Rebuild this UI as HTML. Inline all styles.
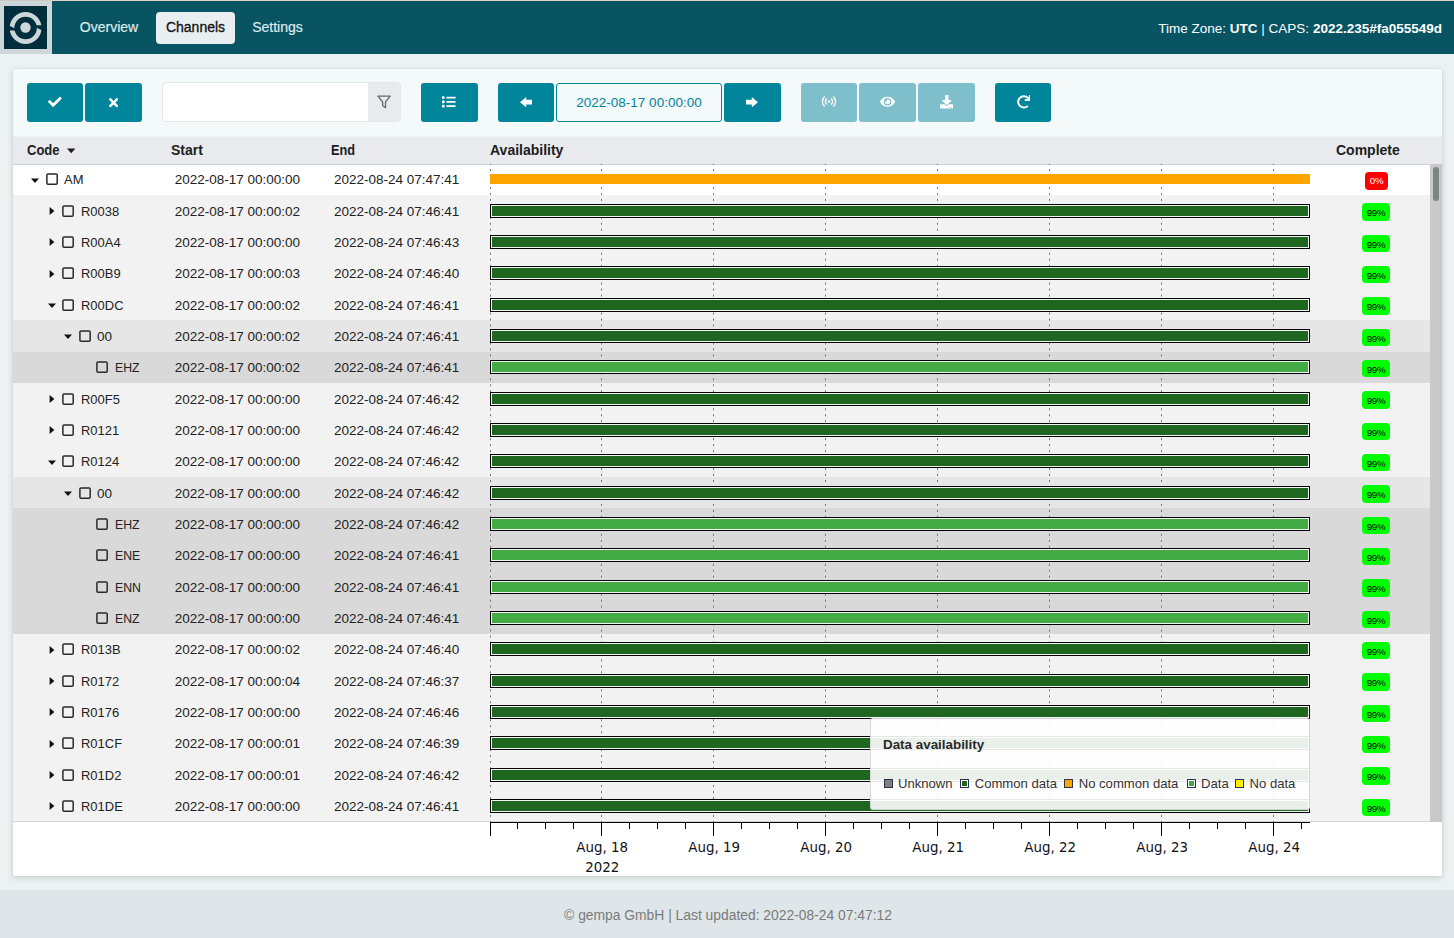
<!DOCTYPE html>
<html lang="en"><head><meta charset="utf-8"><title>CAPS - Channels</title>
<style>
*{box-sizing:border-box;margin:0;padding:0}
html,body{width:1454px;height:938px;overflow:hidden}
body{position:relative;background:#ecf2f2;font-family:"Liberation Sans","DejaVu Sans",sans-serif;font-size:13.5px;color:#222}
.abs{position:absolute}
.topline{position:absolute;left:0;top:0;width:1454px;height:1px;background:linear-gradient(90deg,#cfc9c6 52px,#e5d1cb 52px)}
.nav{position:absolute;left:0;top:1px;width:1454px;height:53px;background:#085462}
.logo{position:absolute;left:0;top:1px;width:52px;height:53px;background:#cdd7da}
.logo i{position:absolute;left:3.6px;top:4.5px;width:43.7px;height:43.8px;background:#012e3c}
.logo svg{position:absolute;left:3.6px;top:4.5px}
.nv{position:absolute;top:12px;height:32px;line-height:31px;font-size:14px;color:#dfe9eb;text-align:center;white-space:nowrap;-webkit-text-stroke:0.2px #dfe9eb}
.nv.act{background:#e9eef0;color:#111;border-radius:4px;font-weight:normal;-webkit-text-stroke:0.3px #111}
.nr{position:absolute;right:12px;top:20px;line-height:18px;font-size:13.5px;color:#fff;white-space:nowrap}
.nr b{font-weight:bold}
.panel{position:absolute;left:13px;top:69px;width:1429px;height:807px;border-radius:2px;background:#fff;box-shadow:0 2px 6px rgba(0,0,0,.15),0 0 2px rgba(40,40,80,.10)}
.toolbar{position:absolute;left:13px;top:69px;width:1429px;height:67px;background:#f4f9fa;border-radius:2px 2px 0 0}
.btn{position:absolute;top:83px;height:39px;background:#00859b;border-radius:3px}
.btn.dis{background:#7fbfcc}
.btn svg{position:absolute;fill:#fff}
.filter{position:absolute;left:162px;top:82px;width:239px;height:40px;background:#fff;border:1px solid #e3e6ea;border-radius:4px;overflow:hidden}
.filter i{position:absolute;right:0;top:0;width:32px;height:38px;background:#e8eaed}
.filter svg{position:absolute;right:9px;top:12px}
.datebox{position:absolute;left:556px;top:83px;width:166px;height:39px;border:1px solid #00859b;border-radius:3px;background:transparent;color:#00859b;text-align:center;line-height:37px;font-size:13.5px}
.thead{position:absolute;left:13px;top:136px;width:1429px;height:29px;background:#e8eaed;border-top:1px solid #eef1f3;border-bottom:1px solid #ccd3d9;z-index:1}
.th{position:absolute;z-index:2;top:141px;line-height:18px;font-weight:bold;font-size:14px;color:#1d1d1d;white-space:nowrap}
.tbody{position:absolute;left:13px;top:164px;width:1417px;height:658px;overflow:hidden}
.row{position:absolute;left:0;width:1417px}
.row.l0{background:#fff}.row.l1{background:#f2f2f2}.row.l2{background:#e6e6e6}.row.l3{background:#d9d9d9}
.tw{position:absolute;top:11px;fill:#111;z-index:2}
.cb{position:absolute;top:9.67px;z-index:2}
.c{position:absolute;top:7.6px;line-height:18px;white-space:nowrap;z-index:2;color:#222}
.st{left:161.7px}.en{left:321px}
.bar{position:absolute;left:477px;width:820px;z-index:2}
.bar.o{top:10.2px;height:10px;background:#ffa500}
.bar.d,.bar.l{top:8.7px;height:14px;border:1px solid #000;background:#f4f4f4;padding:1px}
.bar i{display:block;width:100%;height:100%}
.bar.d i{background:#1f6620}.bar.l i{background:#44aa44}
.bd{position:absolute;top:8.33px;height:17.5px;line-height:19.6px;border-radius:4px;font-size:9.7px;letter-spacing:-.35px;text-align:center;z-index:2}
.bd.r{left:1352px;width:23px;background:#f00;color:#fff;line-height:17.4px}
.bd.g{left:1349px;width:28px;background:#0f0;color:#000}
.grid{position:absolute;left:0;top:164px;z-index:1}
.tline{position:absolute;left:13px;top:821px;width:1429px;height:1px;background:#cfd6db}
.axis{position:absolute;left:0;top:815px;z-index:3}
.axis text{font-family:"DejaVu Sans",sans-serif;font-size:13.4px;fill:#111;text-anchor:middle}
.legend{position:absolute;left:870px;top:718px;width:440px;height:92px;background:rgba(255,255,255,.9);border:1px solid rgba(205,205,210,.8);border-radius:3px;z-index:4;font-size:13.1px;color:#333}
.legend b{position:absolute;left:12px;top:17px;line-height:18px;font-size:13.4px;color:#2a2a2a}
.lg{position:absolute;top:56px;line-height:18px;white-space:nowrap}
.sw{position:absolute;top:60.300px;width:9px;height:9px;border:1px solid #2a3350}
.sw.in{padding:1px;background:#fff}.sw.in i{display:block;width:100%;height:100%}
.strack{position:absolute;left:1430px;top:164px;width:12px;height:658px;background:#c9c9c9;z-index:3}
.sthumb{position:absolute;left:1433px;top:167px;width:6px;height:34px;border-radius:3px;background:#7e8383;z-index:4}
.footer{position:absolute;left:0;top:890px;width:1454px;height:48px;background:#dee6e9;color:#7a7a7a;text-align:center;line-height:50px;font-size:13.85px;padding-left:2px}
.code.n{transform:scaleX(.91);transform-origin:0 50%}
.code.m{transform:scaleX(.96);transform-origin:0 50%}

</style></head>
<body>
<div class="nav"></div><div class="topline"></div>
<div class="logo"><i></i><svg width="44" height="44" viewBox="0 0 44 44"><circle cx="21.5" cy="21.5" r="5.2" fill="#cdd7da"/><circle cx="21.6" cy="22" r="13.6" fill="none" stroke="#cdd7da" stroke-width="4.7"/><path d="M32.200 19.200H39.200V24.900L32.200 21.400zM11 24.500H4V19L11 22.600z" fill="#012e3c"/></svg></div>
<div class="nv" style="left:69px;width:80px">Overview</div>
<div class="nv act" style="left:156px;width:79px">Channels</div>
<div class="nv" style="left:242px;width:71px">Settings</div>
<div class="nr">Time Zone: <b>UTC</b> | CAPS: <b>2022.235#fa055549d</b></div>
<div class="panel"></div>
<div class="toolbar"></div>
<div class="btn" style="left:27px;width:56px"><svg style="left:21.150px;top:12.200px" width="13.700" height="13.700" viewBox="0 0 512 512"><path d="M173.898 439.404l-166.400-166.400c-9.997-9.997-9.997-26.206 0-36.204l36.203-36.204c9.997-9.998 26.207-9.998 36.204 0L192 312.690 432.095 72.596c9.997-9.997 26.207-9.997 36.204 0l36.203 36.204c9.997 9.997 9.997 26.206 0 36.204l-294.400 294.401c-9.998 9.997-26.207 9.997-36.204-.001z"/></svg></div>
<div class="btn" style="left:85px;width:57px"><svg style="left:24px;top:12.800px" width="9.200" height="13.400" viewBox="0 0 352 512"><path d="M242.720 256l100.070-100.070c12.280-12.280 12.280-32.190 0-44.480l-22.240-22.240c-12.280-12.280-32.190-12.280-44.480 0L176 189.280 75.930 89.210c-12.280-12.280-32.190-12.280-44.480 0L9.210 111.450c-12.280 12.280-12.280 32.190 0 44.480L109.280 256 9.210 356.070c-12.280 12.280-12.280 32.190 0 44.480l22.240 22.240c12.280 12.280 32.200 12.280 44.480 0L176 322.720l100.070 100.070c12.280 12.280 32.200 12.280 44.480 0l22.240-22.240c12.280-12.280 12.280-32.190 0-44.480L242.720 256z"/></svg></div>
<div class="filter"><i></i><svg width="14" height="14" viewBox="0 0 14 14"><path d="M1 1.200h12.200L8.500 7v5.600L5.700 10.800V7z" fill="none" stroke="#6b6b6b" stroke-width="1.300" stroke-linejoin="round"/></svg></div>
<div class="btn" style="left:421px;width:57px"><svg style="left:21.450px;top:12.150px" width="13.700" height="13.700" viewBox="0 0 512 512"><path d="M80 368H16a16 16 0 0 0-16 16v64a16 16 0 0 0 16 16h64a16 16 0 0 0 16-16v-64a16 16 0 0 0-16-16zm0-320H16A16 16 0 0 0 0 64v64a16 16 0 0 0 16 16h64a16 16 0 0 0 16-16V64a16 16 0 0 0-16-16zm0 160H16a16 16 0 0 0-16 16v64a16 16 0 0 0 16 16h64a16 16 0 0 0 16-16v-64a16 16 0 0 0-16-16zm416 176H176a16 16 0 0 0-16 16v32a16 16 0 0 0 16 16h320a16 16 0 0 0 16-16v-32a16 16 0 0 0-16-16zm0-320H176a16 16 0 0 0-16 16v32a16 16 0 0 0 16 16h320a16 16 0 0 0 16-16V80a16 16 0 0 0-16-16zm0 160H176a16 16 0 0 0-16 16v32a16 16 0 0 0 16 16h320a16 16 0 0 0 16-16v-32a16 16 0 0 0-16-16z"/></svg></div>
<div class="btn" style="left:498px;width:56px"><svg style="left:22px;top:14px" width="12" height="10.400" viewBox="0 0 12 10.400"><path d="M6.200 0v2.800H12v4.800H6.200v2.800L0 5.200z"/></svg></div>
<div class="datebox">2022-08-17 00:00:00</div>
<div class="btn" style="left:724px;width:57px"><svg style="left:22px;top:14px" width="12" height="10.400" viewBox="0 0 12 10.400"><path d="M5.800 0v2.800H0v4.800h5.800v2.800L12 5.200z"/></svg></div>
<div class="btn dis" style="left:801px;width:56px"><svg style="left:20px;top:13.400px" width="16" height="11" viewBox="0 0 16 11"><circle cx="8" cy="5.500" r="1.250"/><path d="M5.500 2.900a3.600 3.600 0 0 0 0 5.200M10.500 2.900a3.600 3.600 0 0 1 0 5.200M3.300 0.900a6.500 6.500 0 0 0 0 9.200M12.700 0.900a6.500 6.500 0 0 1 0 9.200" fill="none" stroke="#fff" stroke-width="1.400" stroke-linecap="round"/></svg></div>
<div class="btn dis" style="left:859px;width:57px"><svg style="left:20.900px;top:12.300px" width="15.200" height="13.500" viewBox="0 0 576 512"><path d="M572.520 241.400C518.290 135.590 410.930 64 288 64S57.680 135.640 3.480 241.410a32.350 32.350 0 0 0 0 29.190C57.710 376.410 165.070 448 288 448s230.320-71.640 284.520-177.410a32.350 32.350 0 0 0 0-29.190zM288 400a144 144 0 1 1 144-144 143.930 143.930 0 0 1-144 144zm0-240a95.310 95.310 0 0 0-25.310 3.790 47.850 47.850 0 0 1-66.900 66.900A95.780 95.780 0 1 0 288 160z"/></svg></div>
<div class="btn dis" style="left:918px;width:57px"><svg style="left:21.850px;top:12.250px" width="13.500" height="13.500" viewBox="0 0 512 512"><path d="M216 0h80c13.300 0 24 10.700 24 24v168h87.700c17.800 0 26.700 21.500 14.100 34.100L269.700 378.300c-7.500 7.500-19.800 7.500-27.300 0L90.100 226.100c-12.600-12.600-3.700-34.100 14.100-34.100H192V24c0-13.300 10.700-24 24-24zm296 376v112c0 13.300-10.700 24-24 24H24c-13.300 0-24-10.700-24-24V376c0-13.300 10.700-24 24-24h146.700l49 49c20.100 20.100 52.500 20.100 72.600 0l49-49H488c13.300 0 24 10.700 24 24zm-124 88c0-11-9-20-20-20s-20 9-20 20 9 20 20 20 20-9 20-20zm64 0c0-11-9-20-20-20s-20 9-20 20 9 20 20 20 20-9 20-20z"/></svg></div>
<div class="btn" style="left:995px;width:56px"><svg style="left:21.600px;top:12px" width="13.700" height="13.700" viewBox="0 0 512 512"><path d="M500.330 0h-47.410a12 12 0 0 0-12 12.570l4 82.760A247.420 247.420 0 0 0 256 8C119.340 8 7.900 119.530 8 256.190 8.100 393.070 119.100 504 256 504a247.100 247.100 0 0 0 166.180-63.910 12 12 0 0 0 .48-17.430l-34-34a12 12 0 0 0-16.380-.55A176 176 0 1 1 402.100 157.800l-101.530-4.870a12 12 0 0 0-12.570 12v47.410a12 12 0 0 0 12 12h200.330a12 12 0 0 0 12-12V12a12 12 0 0 0-12-12z"/></svg></div>
<div class="thead"></div>
<div class="th" style="left:27px"><span style="display:inline-block;transform:scaleX(.93);transform-origin:0 50%">Code</span><svg width="9" height="6" viewBox="0 0 9 6" style="position:absolute;left:40px;top:7px"><path d="M0 0.500h8.400L4.200 5.300z" fill="#1d1d1d"/></svg></div>
<div class="th" style="left:171px">Start</div>
<div class="th" style="left:331px;transform:scaleX(.91);transform-origin:0 50%">End</div>
<div class="th" style="left:490px">Availability</div>
<div class="th" style="left:1336px">Complete</div>
<div class="tbody">
<div class="row l0" style="top:-0.33px;height:31.33px"><svg class="tw" style="left:17.0px" width="10" height="10" viewBox="0 0 10 10"><path d="M1 3.400h8L5 8z"/></svg><svg class="cb" style="left:32.8px" width="13" height="13" viewBox="0 0 13 13"><rect x="0.900" y="0.900" width="10.300" height="10.300" rx="1.100" fill="none" stroke="#2a2a2a" stroke-width="1.500"/></svg><span class="c code m" style="left:50.9px">AM</span><span class="c st">2022-08-17 00:00:00</span><span class="c en">2022-08-24 07:47:41</span><span class="bar o"><i></i></span><span class="bd r">0%</span></div>
<div class="row l1" style="top:31.0px;height:31.33px"><svg class="tw" style="left:33.8px" width="10" height="10" viewBox="0 0 10 10"><path d="M2.600 1v8L7.400 5z"/></svg><svg class="cb" style="left:49.4px" width="13" height="13" viewBox="0 0 13 13"><rect x="0.900" y="0.900" width="10.300" height="10.300" rx="1.100" fill="none" stroke="#2a2a2a" stroke-width="1.500"/></svg><span class="c code m" style="left:67.5px">R0038</span><span class="c st">2022-08-17 00:00:02</span><span class="c en">2022-08-24 07:46:41</span><span class="bar d"><i></i></span><span class="bd g">99%</span></div>
<div class="row l1" style="top:62.34px;height:31.33px"><svg class="tw" style="left:33.8px" width="10" height="10" viewBox="0 0 10 10"><path d="M2.600 1v8L7.400 5z"/></svg><svg class="cb" style="left:49.4px" width="13" height="13" viewBox="0 0 13 13"><rect x="0.900" y="0.900" width="10.300" height="10.300" rx="1.100" fill="none" stroke="#2a2a2a" stroke-width="1.500"/></svg><span class="c code m" style="left:67.5px">R00A4</span><span class="c st">2022-08-17 00:00:00</span><span class="c en">2022-08-24 07:46:43</span><span class="bar d"><i></i></span><span class="bd g">99%</span></div>
<div class="row l1" style="top:93.67px;height:31.33px"><svg class="tw" style="left:33.8px" width="10" height="10" viewBox="0 0 10 10"><path d="M2.600 1v8L7.400 5z"/></svg><svg class="cb" style="left:49.4px" width="13" height="13" viewBox="0 0 13 13"><rect x="0.900" y="0.900" width="10.300" height="10.300" rx="1.100" fill="none" stroke="#2a2a2a" stroke-width="1.500"/></svg><span class="c code m" style="left:67.5px">R00B9</span><span class="c st">2022-08-17 00:00:03</span><span class="c en">2022-08-24 07:46:40</span><span class="bar d"><i></i></span><span class="bd g">99%</span></div>
<div class="row l1" style="top:125.0px;height:31.33px"><svg class="tw" style="left:33.6px" width="10" height="10" viewBox="0 0 10 10"><path d="M1 3.400h8L5 8z"/></svg><svg class="cb" style="left:49.4px" width="13" height="13" viewBox="0 0 13 13"><rect x="0.900" y="0.900" width="10.300" height="10.300" rx="1.100" fill="none" stroke="#2a2a2a" stroke-width="1.500"/></svg><span class="c code m" style="left:67.5px">R00DC</span><span class="c st">2022-08-17 00:00:02</span><span class="c en">2022-08-24 07:46:41</span><span class="bar d"><i></i></span><span class="bd g">99%</span></div>
<div class="row l2" style="top:156.34px;height:31.33px"><svg class="tw" style="left:50.2px" width="10" height="10" viewBox="0 0 10 10"><path d="M1 3.400h8L5 8z"/></svg><svg class="cb" style="left:66.0px" width="13" height="13" viewBox="0 0 13 13"><rect x="0.900" y="0.900" width="10.300" height="10.300" rx="1.100" fill="none" stroke="#2a2a2a" stroke-width="1.500"/></svg><span class="c code" style="left:84.1px">00</span><span class="c st">2022-08-17 00:00:02</span><span class="c en">2022-08-24 07:46:41</span><span class="bar d"><i></i></span><span class="bd g">99%</span></div>
<div class="row l3" style="top:187.67px;height:31.33px"><svg class="cb" style="left:82.6px" width="13" height="13" viewBox="0 0 13 13"><rect x="0.900" y="0.900" width="10.300" height="10.300" rx="1.100" fill="none" stroke="#2a2a2a" stroke-width="1.500"/></svg><span class="c code n" style="left:101.6px">EHZ</span><span class="c st">2022-08-17 00:00:02</span><span class="c en">2022-08-24 07:46:41</span><span class="bar l"><i></i></span><span class="bd g">99%</span></div>
<div class="row l1" style="top:219.0px;height:31.33px"><svg class="tw" style="left:33.8px" width="10" height="10" viewBox="0 0 10 10"><path d="M2.600 1v8L7.400 5z"/></svg><svg class="cb" style="left:49.4px" width="13" height="13" viewBox="0 0 13 13"><rect x="0.900" y="0.900" width="10.300" height="10.300" rx="1.100" fill="none" stroke="#2a2a2a" stroke-width="1.500"/></svg><span class="c code m" style="left:67.5px">R00F5</span><span class="c st">2022-08-17 00:00:00</span><span class="c en">2022-08-24 07:46:42</span><span class="bar d"><i></i></span><span class="bd g">99%</span></div>
<div class="row l1" style="top:250.34px;height:31.33px"><svg class="tw" style="left:33.8px" width="10" height="10" viewBox="0 0 10 10"><path d="M2.600 1v8L7.400 5z"/></svg><svg class="cb" style="left:49.4px" width="13" height="13" viewBox="0 0 13 13"><rect x="0.900" y="0.900" width="10.300" height="10.300" rx="1.100" fill="none" stroke="#2a2a2a" stroke-width="1.500"/></svg><span class="c code m" style="left:67.5px">R0121</span><span class="c st">2022-08-17 00:00:00</span><span class="c en">2022-08-24 07:46:42</span><span class="bar d"><i></i></span><span class="bd g">99%</span></div>
<div class="row l1" style="top:281.67px;height:31.33px"><svg class="tw" style="left:33.6px" width="10" height="10" viewBox="0 0 10 10"><path d="M1 3.400h8L5 8z"/></svg><svg class="cb" style="left:49.4px" width="13" height="13" viewBox="0 0 13 13"><rect x="0.900" y="0.900" width="10.300" height="10.300" rx="1.100" fill="none" stroke="#2a2a2a" stroke-width="1.500"/></svg><span class="c code m" style="left:67.5px">R0124</span><span class="c st">2022-08-17 00:00:00</span><span class="c en">2022-08-24 07:46:42</span><span class="bar d"><i></i></span><span class="bd g">99%</span></div>
<div class="row l2" style="top:313.0px;height:31.33px"><svg class="tw" style="left:50.2px" width="10" height="10" viewBox="0 0 10 10"><path d="M1 3.400h8L5 8z"/></svg><svg class="cb" style="left:66.0px" width="13" height="13" viewBox="0 0 13 13"><rect x="0.900" y="0.900" width="10.300" height="10.300" rx="1.100" fill="none" stroke="#2a2a2a" stroke-width="1.500"/></svg><span class="c code" style="left:84.1px">00</span><span class="c st">2022-08-17 00:00:00</span><span class="c en">2022-08-24 07:46:42</span><span class="bar d"><i></i></span><span class="bd g">99%</span></div>
<div class="row l3" style="top:344.34px;height:31.33px"><svg class="cb" style="left:82.6px" width="13" height="13" viewBox="0 0 13 13"><rect x="0.900" y="0.900" width="10.300" height="10.300" rx="1.100" fill="none" stroke="#2a2a2a" stroke-width="1.500"/></svg><span class="c code n" style="left:101.6px">EHZ</span><span class="c st">2022-08-17 00:00:00</span><span class="c en">2022-08-24 07:46:42</span><span class="bar l"><i></i></span><span class="bd g">99%</span></div>
<div class="row l3" style="top:375.67px;height:31.33px"><svg class="cb" style="left:82.6px" width="13" height="13" viewBox="0 0 13 13"><rect x="0.900" y="0.900" width="10.300" height="10.300" rx="1.100" fill="none" stroke="#2a2a2a" stroke-width="1.500"/></svg><span class="c code n" style="left:101.6px">ENE</span><span class="c st">2022-08-17 00:00:00</span><span class="c en">2022-08-24 07:46:41</span><span class="bar l"><i></i></span><span class="bd g">99%</span></div>
<div class="row l3" style="top:407.0px;height:31.33px"><svg class="cb" style="left:82.6px" width="13" height="13" viewBox="0 0 13 13"><rect x="0.900" y="0.900" width="10.300" height="10.300" rx="1.100" fill="none" stroke="#2a2a2a" stroke-width="1.500"/></svg><span class="c code n" style="left:101.6px">ENN</span><span class="c st">2022-08-17 00:00:00</span><span class="c en">2022-08-24 07:46:41</span><span class="bar l"><i></i></span><span class="bd g">99%</span></div>
<div class="row l3" style="top:438.34px;height:31.33px"><svg class="cb" style="left:82.6px" width="13" height="13" viewBox="0 0 13 13"><rect x="0.900" y="0.900" width="10.300" height="10.300" rx="1.100" fill="none" stroke="#2a2a2a" stroke-width="1.500"/></svg><span class="c code n" style="left:101.6px">ENZ</span><span class="c st">2022-08-17 00:00:00</span><span class="c en">2022-08-24 07:46:41</span><span class="bar l"><i></i></span><span class="bd g">99%</span></div>
<div class="row l1" style="top:469.67px;height:31.33px"><svg class="tw" style="left:33.8px" width="10" height="10" viewBox="0 0 10 10"><path d="M2.600 1v8L7.400 5z"/></svg><svg class="cb" style="left:49.4px" width="13" height="13" viewBox="0 0 13 13"><rect x="0.900" y="0.900" width="10.300" height="10.300" rx="1.100" fill="none" stroke="#2a2a2a" stroke-width="1.500"/></svg><span class="c code m" style="left:67.5px">R013B</span><span class="c st">2022-08-17 00:00:02</span><span class="c en">2022-08-24 07:46:40</span><span class="bar d"><i></i></span><span class="bd g">99%</span></div>
<div class="row l1" style="top:501.0px;height:31.33px"><svg class="tw" style="left:33.8px" width="10" height="10" viewBox="0 0 10 10"><path d="M2.600 1v8L7.400 5z"/></svg><svg class="cb" style="left:49.4px" width="13" height="13" viewBox="0 0 13 13"><rect x="0.900" y="0.900" width="10.300" height="10.300" rx="1.100" fill="none" stroke="#2a2a2a" stroke-width="1.500"/></svg><span class="c code m" style="left:67.5px">R0172</span><span class="c st">2022-08-17 00:00:04</span><span class="c en">2022-08-24 07:46:37</span><span class="bar d"><i></i></span><span class="bd g">99%</span></div>
<div class="row l1" style="top:532.34px;height:31.33px"><svg class="tw" style="left:33.8px" width="10" height="10" viewBox="0 0 10 10"><path d="M2.600 1v8L7.400 5z"/></svg><svg class="cb" style="left:49.4px" width="13" height="13" viewBox="0 0 13 13"><rect x="0.900" y="0.900" width="10.300" height="10.300" rx="1.100" fill="none" stroke="#2a2a2a" stroke-width="1.500"/></svg><span class="c code m" style="left:67.5px">R0176</span><span class="c st">2022-08-17 00:00:00</span><span class="c en">2022-08-24 07:46:46</span><span class="bar d"><i></i></span><span class="bd g">99%</span></div>
<div class="row l1" style="top:563.67px;height:31.33px"><svg class="tw" style="left:33.8px" width="10" height="10" viewBox="0 0 10 10"><path d="M2.600 1v8L7.400 5z"/></svg><svg class="cb" style="left:49.4px" width="13" height="13" viewBox="0 0 13 13"><rect x="0.900" y="0.900" width="10.300" height="10.300" rx="1.100" fill="none" stroke="#2a2a2a" stroke-width="1.500"/></svg><span class="c code m" style="left:67.5px">R01CF</span><span class="c st">2022-08-17 00:00:01</span><span class="c en">2022-08-24 07:46:39</span><span class="bar d"><i></i></span><span class="bd g">99%</span></div>
<div class="row l1" style="top:595.0px;height:31.33px"><svg class="tw" style="left:33.8px" width="10" height="10" viewBox="0 0 10 10"><path d="M2.600 1v8L7.400 5z"/></svg><svg class="cb" style="left:49.4px" width="13" height="13" viewBox="0 0 13 13"><rect x="0.900" y="0.900" width="10.300" height="10.300" rx="1.100" fill="none" stroke="#2a2a2a" stroke-width="1.500"/></svg><span class="c code m" style="left:67.5px">R01D2</span><span class="c st">2022-08-17 00:00:01</span><span class="c en">2022-08-24 07:46:42</span><span class="bar d"><i></i></span><span class="bd g">99%</span></div>
<div class="row l1" style="top:626.34px;height:31.33px"><svg class="tw" style="left:33.8px" width="10" height="10" viewBox="0 0 10 10"><path d="M2.600 1v8L7.400 5z"/></svg><svg class="cb" style="left:49.4px" width="13" height="13" viewBox="0 0 13 13"><rect x="0.900" y="0.900" width="10.300" height="10.300" rx="1.100" fill="none" stroke="#2a2a2a" stroke-width="1.500"/></svg><span class="c code m" style="left:67.5px">R01DE</span><span class="c st">2022-08-17 00:00:00</span><span class="c en">2022-08-24 07:46:41</span><span class="bar d"><i></i></span><span class="bd g">99%</span></div>
</div>
<svg class="grid" width="1454" height="658" viewBox="0 0 1454 658"><line x1="490.5" y1="0" x2="490.5" y2="658" stroke="#747474" stroke-width="1" stroke-dasharray="2 3.981" stroke-dashoffset="0.981"/><line x1="601.5" y1="0" x2="601.5" y2="658" stroke="#747474" stroke-width="1" stroke-dasharray="2 3.981" stroke-dashoffset="0.981"/><line x1="713.5" y1="0" x2="713.5" y2="658" stroke="#747474" stroke-width="1" stroke-dasharray="2 3.981" stroke-dashoffset="0.981"/><line x1="825.5" y1="0" x2="825.5" y2="658" stroke="#747474" stroke-width="1" stroke-dasharray="2 3.981" stroke-dashoffset="0.981"/><line x1="937.5" y1="0" x2="937.5" y2="658" stroke="#747474" stroke-width="1" stroke-dasharray="2 3.981" stroke-dashoffset="0.981"/><line x1="1049.5" y1="0" x2="1049.5" y2="658" stroke="#747474" stroke-width="1" stroke-dasharray="2 3.981" stroke-dashoffset="0.981"/><line x1="1161.5" y1="0" x2="1161.5" y2="658" stroke="#747474" stroke-width="1" stroke-dasharray="2 3.981" stroke-dashoffset="0.981"/><line x1="1273.5" y1="0" x2="1273.5" y2="658" stroke="#747474" stroke-width="1" stroke-dasharray="2 3.981" stroke-dashoffset="0.981"/></svg>
<div class="tline"></div>
<svg class="axis" width="1454" height="62" viewBox="0 0 1454 62"><path d="M490 7.500H1310" stroke="#000" stroke-width="1" fill="none"/><path d="M490.5 7v14M517.5 7v7M545.5 7v7M573.5 7v7M601.5 7v14M629.5 7v7M657.5 7v7M685.5 7v7M713.5 7v14M741.5 7v7M769.5 7v7M797.5 7v7M825.5 7v14M853.5 7v7M881.5 7v7M909.5 7v7M937.5 7v14M965.5 7v7M993.5 7v7M1021.5 7v7M1049.5 7v14M1077.5 7v7M1105.5 7v7M1133.5 7v7M1161.5 7v14M1189.5 7v7M1217.5 7v7M1245.5 7v7M1273.5 7v14M1301.5 7v7" stroke="#000" stroke-width="1" fill="none"/><text x="602.2" y="37">Aug, 18</text><text x="714.2" y="37">Aug, 19</text><text x="826.2" y="37">Aug, 20</text><text x="938.2" y="37">Aug, 21</text><text x="1050.2" y="37">Aug, 22</text><text x="1162.2" y="37">Aug, 23</text><text x="1274.2" y="37">Aug, 24</text><text x="602.2" y="57">2022</text></svg>
<div class="legend"><b>Data availability</b>
<span class="sw" style="left:12.500px;background:#808080"></span><span class="lg" style="left:27px">Unknown</span>
<span class="sw in" style="left:89.300px"><i style="background:#1f6620"></i></span><span class="lg" style="left:103.700px">Common data</span>
<span class="sw" style="left:193px;background:#ffa500"></span><span class="lg" style="left:207.700px">No common data</span>
<span class="sw in" style="left:315.500px"><i style="background:#44aa44"></i></span><span class="lg" style="left:330px">Data</span>
<span class="sw" style="left:363.900px;background:#ffee00"></span><span class="lg" style="left:378.500px">No data</span>
</div>
<div class="strack"></div><div class="sthumb"></div>
<div class="footer">&copy; gempa GmbH | Last updated: 2022-08-24 07:47:12</div>
</body></html>
